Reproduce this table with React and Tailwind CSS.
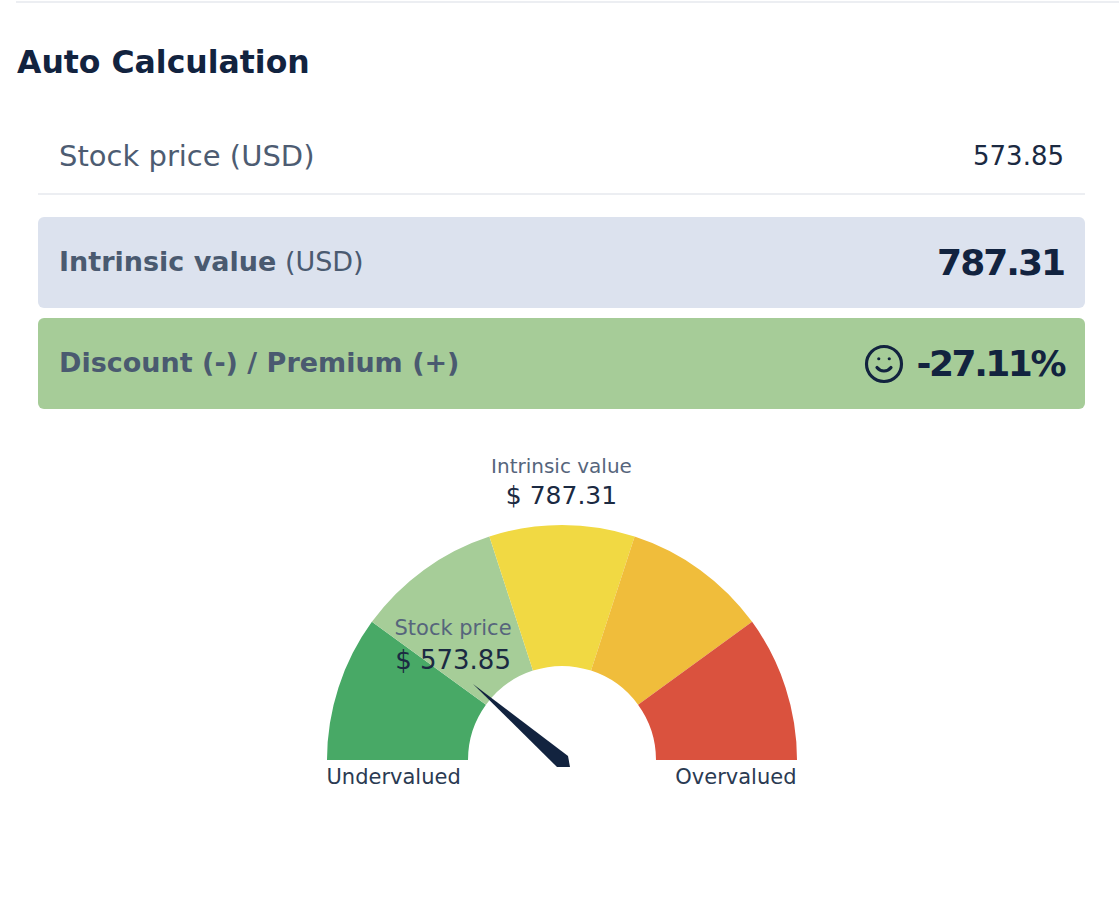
import { Smile } from "lucide-react";

const CX = 240;
const CY = 239;
const R_OUT = 235;
const R_IN = 94;

// angle in degrees measured from the left end of the half circle, going over the top
const pt = (r, deg) => {
  const a = (deg * Math.PI) / 180;
  return [CX - r * Math.cos(a), CY - r * Math.sin(a)];
};

const segment = (a0, a1) => {
  const [x0, y0] = pt(R_OUT, a0);
  const [x1, y1] = pt(R_OUT, a1);
  const [x2, y2] = pt(R_IN, a1);
  const [x3, y3] = pt(R_IN, a0);
  return `M${x0} ${y0} A${R_OUT} ${R_OUT} 0 0 1 ${x1} ${y1} L${x2} ${y2} A${R_IN} ${R_IN} 0 0 0 ${x3} ${y3} Z`;
};

const bands = ["#48a966", "#a6cd98", "#f1d943", "#f0bd3b", "#da523e"];

const Gauge = () => (
  <div className="flex flex-col items-center">
    <div className="text-[20px] leading-[24px] text-[#56657c]">Intrinsic value</div>
    <div className="mt-[2px] text-[25px] leading-[32px] text-[#1b2a42]">$ 787.31</div>
    <div className="relative mt-[9px] w-[480px]">
      <svg width="480" height="250" viewBox="0 0 480 250" className="block">
        {bands.map((c, i) => (
          <path key={i} d={segment(i * 36, (i + 1) * 36)} fill={c} />
        ))}
        <polygon points="151,163 246,235 248,246 235,246" fill="#12233f" />
      </svg>
      <div className="absolute left-[73px] top-[96px] flex flex-col items-center">
        <div className="text-[21px] leading-[22px] text-[#56657c]">Stock price</div>
        <div className="mt-[6px] text-[26px] leading-[30px] text-[#1b2a42]">$ 573.85</div>
      </div>
    </div>
    <div className="-mt-[5px] flex w-[470px] justify-between text-[21px] leading-[22px] text-[#2a3a52]">
      <span>Undervalued</span>
      <span>Overvalued</span>
    </div>
  </div>
);

export default function App() {
  return (
    <div className="min-h-screen bg-white pt-[1px] font-['DejaVu_Sans',sans-serif]">
      <div className="ml-4 border-t-2 border-[#eceef2]" />
      <h1 className="ml-[17px] mt-[39px] text-[31.5px] font-bold leading-[40px] text-[#12233f]">
        Auto Calculation
      </h1>
      <div className="ml-[38px] mr-[34px]">
        <div className="mt-[38px] flex h-[75px] items-center justify-between border-b-2 border-[#eceef2] px-[21px]">
          <span className="text-[29px] text-[#4d5c72]">Stock price (USD)</span>
          <span className="text-[26px] text-[#1b2a42]">573.85</span>
        </div>
        <div className="mt-[22px] flex h-[91px] items-center justify-between rounded-md bg-[#dce2ee] px-[21px]">
          <span className="text-[27px] text-[#4a5a70]">
            <span className="font-bold">Intrinsic value</span> (USD)
          </span>
          <span className="text-[36px] font-bold tracking-[-2px] text-[#12233f]">787.31</span>
        </div>
        <div className="mt-[10px] flex h-[91px] items-center justify-between rounded-md bg-[#a6cc98] px-[21px]">
          <span className="text-[27px] font-bold text-[#4a5a70]">Discount (-) / Premium (+)</span>
          <span className="flex items-center gap-[12px] text-[36px] font-bold tracking-[-2.5px] text-[#12233f]">
            <Smile size={42} strokeWidth={1.8} />
            -27.11%
          </span>
        </div>
        <div className="mt-[45px]">
          <Gauge />
        </div>
      </div>
    </div>
  );
}
